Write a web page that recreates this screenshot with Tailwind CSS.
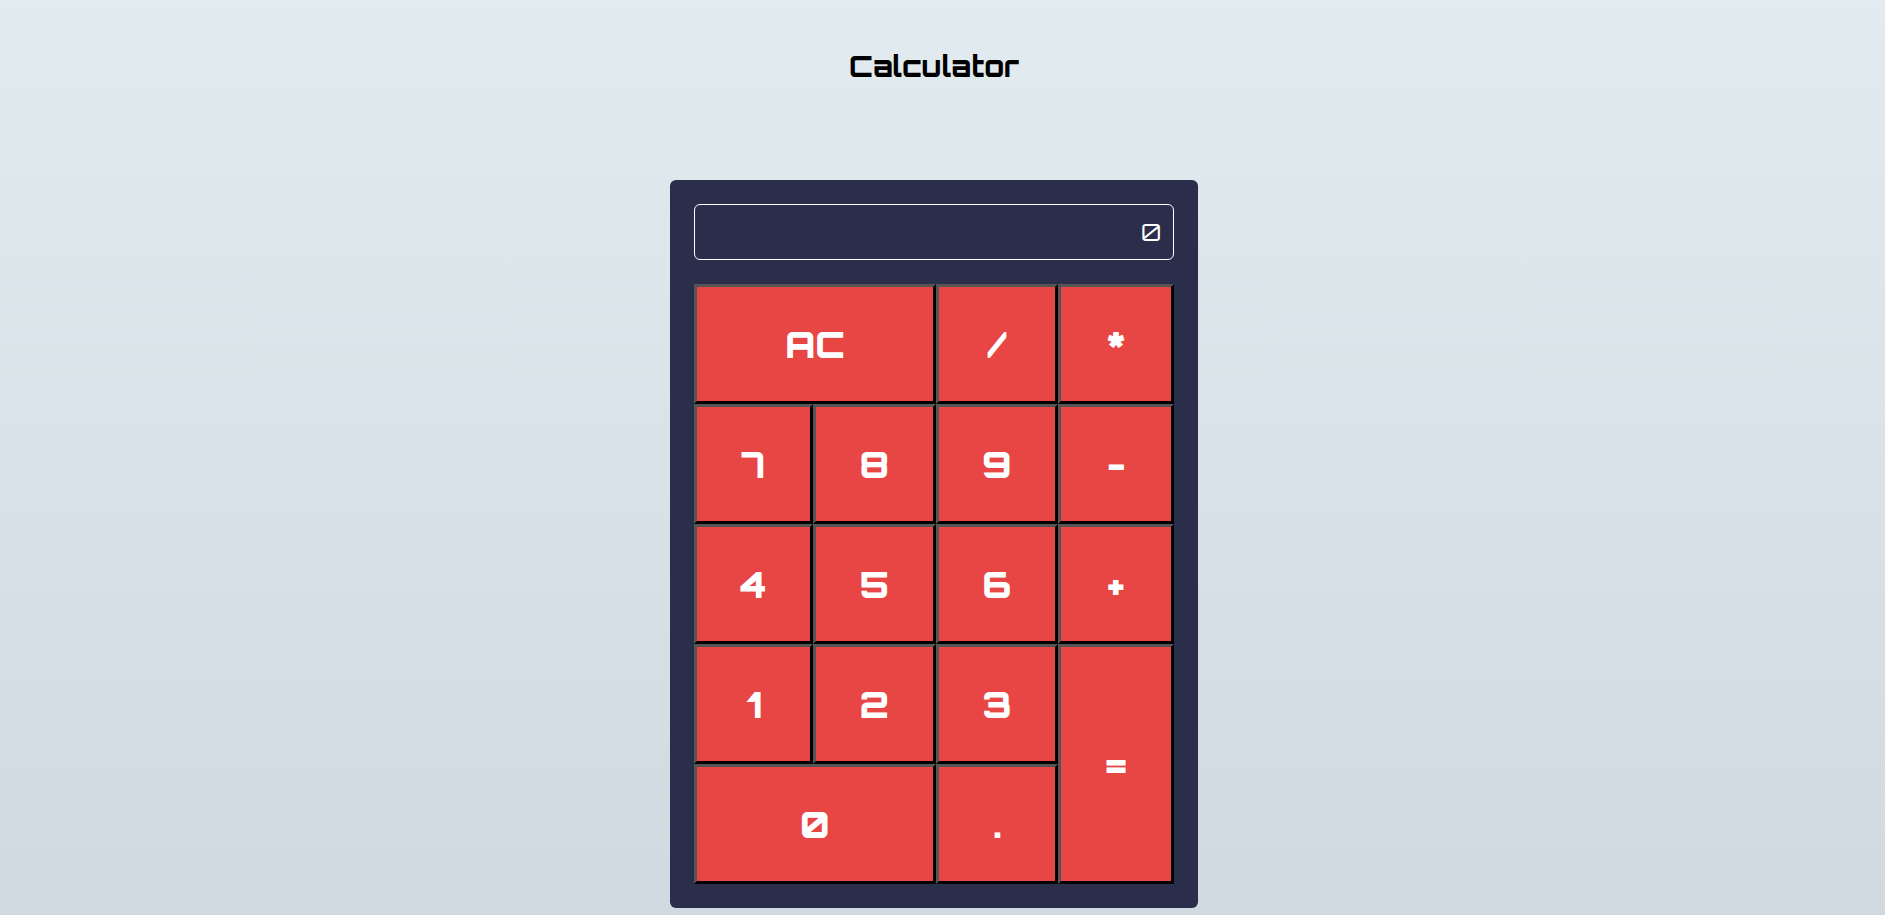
<!DOCTYPE html>
<html lang="en">
<head>
<meta charset="utf-8">
<meta name="viewport" content="width=device-width, initial-scale=1">
<title>Calculator</title>
<script src="https://cdn.jsdelivr.net/npm/@tailwindcss/browser@4"></script>
</head>
<body class="min-h-screen bg-linear-to-t from-[#cfd9df] to-[#e2ebf0] pt-12 pr-[17px] pb-6 font-['Orbitron','DejaVu_Sans',sans-serif]">
<h1 class="mb-24 text-center text-[29px] leading-9 font-extrabold text-black">Calculator</h1>
<main class="mx-auto flex max-w-[528px] flex-col gap-6 rounded-md bg-[#2b2e4a] p-6">
  <input type="text" readonly value="0" aria-label="Result" class="h-14 w-full rounded-md border border-white bg-transparent px-3 text-right text-2xl font-normal text-white outline-none">
  <div class="grid auto-rows-[120px] grid-cols-[119fr_123fr_122fr_116fr] text-4xl font-black text-white *:border-3 *:border-t-[#555] *:border-r-black *:border-b-black *:border-l-[#555] *:bg-[#e84545] *:pt-0.5">
    <button type="button" class="col-span-2">AC</button>
    <button type="button">/</button>
    <button type="button">*</button>
    <button type="button">7</button>
    <button type="button">8</button>
    <button type="button">9</button>
    <button type="button">-</button>
    <button type="button">4</button>
    <button type="button">5</button>
    <button type="button">6</button>
    <button type="button">+</button>
    <button type="button">1</button>
    <button type="button">2</button>
    <button type="button">3</button>
    <button type="button" class="row-span-2">=</button>
    <button type="button" class="col-span-2">0</button>
    <button type="button">.</button>
  </div>
</main>
</body>
</html>
